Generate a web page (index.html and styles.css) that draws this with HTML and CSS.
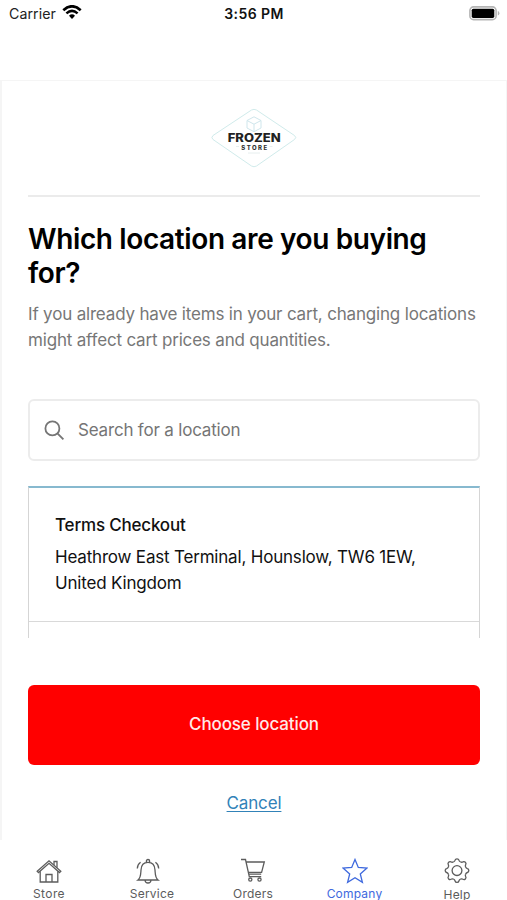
FILE: index.html
```html
<!DOCTYPE html>
<html lang="en">
<head>
<meta charset="utf-8">
<title>Choose location</title>
<link rel="stylesheet" href="styles.css">
</head>
<body>
<div class="screen">
  <header class="status">
    <div class="carrier"><span>Carrier</span>
      <svg width="20" height="15" viewBox="0 0 20 15" fill="none" stroke="#000"><path d="M1.3 5.2Q10-2.6 18.7 5.2" stroke-width="2.7"/><path d="M4.4 8.4Q10 3.4 15.6 8.4" stroke-width="2.5"/><path d="M7 10.7Q10 8 13 10.7L10 14Z" fill="#000" stroke="none"/></svg>
    </div>
    <time>3:56 PM</time>
    <svg class="battery" width="31" height="15" viewBox="0 0 31 15"><rect x=".9" y=".9" width="26.2" height="12.7" rx="3.7" fill="#fff" stroke="#b5b5b5" stroke-width="1.6"/><rect x="2.7" y="2.7" width="22.6" height="9.2" rx="1.6"/><path d="M28.8 5Q30.4 5.5 30.4 7.2T28.8 9.5Z" fill="#b5b5b5"/></svg>
  </header>

  <main class="card">
    <div class="brand">
      <svg width="88" height="60" viewBox="0 0 88 60" fill="none">
        <path d="M41.5 2Q44 .7 46.5 2L84.5 27.5Q87 29.5 84.5 31.5L46.5 58Q44 59.5 41.5 58L3 31.5Q.8 29.5 3 27.5Z" stroke="#d0ebeb"/>
        <path d="M44 8.8L51 12.5V20L44 23.7L37 20V12.5ZM37 12.5L44 16.2L51 12.5M44 16.2V23.7" stroke="#cfe6ec"/>
        <text x="44.2" y="34.4" class="logo-name" textLength="53" lengthAdjust="spacingAndGlyphs">FROZEN</text>
        <text x="44.2" y="41.8" class="logo-sub" textLength="26" lengthAdjust="spacing">STORE</text>
        <path d="M26 38.5H29M59.5 38.5H62.5M38 45H50" stroke="#e6eeee"/>
      </svg>
    </div>
    <h1>Which location are you buying for?</h1>
    <p class="intro">If you already have items in your cart, changing locations might affect cart prices and quantities.</p>
    <div class="search">
      <svg width="21" height="21" viewBox="0 0 21 21" fill="none" stroke="#757575" stroke-width="1.8"><circle cx="8.4" cy="8.4" r="7"/><path d="M13.4 13.4L19.4 19.4"/></svg>
      <span>Search for a location</span>
    </div>
    <div class="locations">
      <div class="location">
        <h2>Terms Checkout</h2>
        <p>Heathrow East Terminal, Hounslow, TW6 1EW, United Kingdom</p>
      </div>
    </div>
    <button class="choose">Choose location</button>
    <a class="cancel" href="#">Cancel</a>
  </main>

  <nav class="tabs">
    <div class="tab store">
      <svg width="26" height="26" viewBox="0 0 26 26"><path d="M1.2 13.2L13 2.8L24.8 13.2L23.5 14.5L13 5.3L2.5 14.5Z"/><path d="M4.2 13.2V24H21.8V13.2M10 24V16.5H16V24M18 7V3.5H21V9.7"/></svg>
      <span>Store</span>
    </div>
    <div class="tab service">
      <svg width="26" height="26" viewBox="0 0 26 26"><path d="M3 22C5.8 20 5.7 17 6 12C6.2 6.8 8.5 4.3 13 4.3S19.8 6.8 20 12C20.3 17 20.2 20 23 22ZM11.4 4.3V3Q11.4 1.5 13 1.5T14.6 3V4.3M10 22.2Q10.3 25 13 25T16 22.2"/><path d="M5.6 4.3Q2.5 6.3 2.3 10.5M20.4 4.3Q23.5 6.3 23.7 10.5"/></svg>
      <span>Service</span>
    </div>
    <div class="tab orders">
      <svg width="26" height="26" viewBox="0 0 26 26"><path d="M1 1.5H5.5L9.3 18.6H21.2M6.1 4H24.3L21.6 14.3H8.4M9 16.2H21.2"/><circle cx="10.3" cy="21.6" r="1.6"/><circle cx="19.5" cy="21.6" r="1.6"/></svg>
      <span>Orders</span>
    </div>
    <div class="tab company">
      <svg width="26" height="26" viewBox="0 0 26 26"><path d="M13 1.5L16.3 9.5L25 10.1L18.3 15.9L20.4 24.3L13 19.7L5.6 24.3L7.7 15.9L1 10.1L9.7 9.5Z"/></svg>
      <span>Company</span>
    </div>
    <div class="tab help">
      <svg width="26" height="26" viewBox="-13 -12.6 26 26"><defs><path id="tooth" d="M-3.56-8.59C-2.46-9.05-2.1-9.6-1.9-10.4Q-1.6-11.8 0-11.8T1.9-10.4C2.1-9.6 2.46-9.05 3.56-8.59"/></defs><use href="#tooth"/><use href="#tooth" transform="rotate(45)"/><use href="#tooth" transform="rotate(90)"/><use href="#tooth" transform="rotate(135)"/><use href="#tooth" transform="rotate(180)"/><use href="#tooth" transform="rotate(225)"/><use href="#tooth" transform="rotate(270)"/><use href="#tooth" transform="rotate(315)"/><circle r="4.9"/></svg>
      <span>Help</span>
    </div>
  </nav>
</div>
</body>
</html>
```
FILE: styles.css
```css
* { box-sizing: border-box; margin: 0; padding: 0; }
body { background: #fff; color: #111; font-family: Inter, "Liberation Sans", sans-serif; }
.screen { width: 507px; height: 900px; overflow: hidden; display: flex; flex-direction: column; }

.status { height: 80px; flex: none; display: grid; grid-template-columns: 1fr auto 1fr; align-items: start; padding: 5px 7px 0 8px; line-height: 18px; }
.carrier { display: flex; gap: 6px; padding-left: 1px; font-size: 14.2px; letter-spacing: .05px; color: #222; }
.status time { font-size: 14px; font-weight: 600; letter-spacing: .4px; }
.battery { justify-self: end; margin-top: 1px; }

.card { height: 760px; flex: none; padding: 0 26px; border: 1px solid #f5f5f5; border-width: 1px 1px 0 2px; }
.brand { height: 116px; padding-top: 27px; border-bottom: 2px solid #ebebeb; display: flex; justify-content: center; }
.logo-name { font: 800 11.5px Inter, sans-serif; fill: #222; text-anchor: middle; }
.logo-sub { font: 800 6px Inter, sans-serif; fill: #333; text-anchor: middle; }
h1 { margin-top: 25px; font-size: 28px; line-height: 34px; font-weight: 600; letter-spacing: -.38px; color: #000; }
.intro { margin: 11px -10px 0 0; font-size: 17px; line-height: 26px; letter-spacing: -.18px; color: #777; }
.search { height: 62px; margin-top: 46px; border: 2px solid #ececec; border-radius: 6px; display: flex; align-items: center; padding-left: 14px; gap: 13px; font-size: 17px; letter-spacing: -.19px; color: #757575; }
.locations { height: 152px; margin-top: 25px; border: 1px solid #d5d5d5; border-top: 2px solid #87b9cf; border-bottom: 0; }
.location { height: 134px; padding: 24px 26px 0; border-bottom: 1px solid #d9d9d9; letter-spacing: -.19px; }
h2 { font-size: 17px; line-height: 26px; font-weight: 500; }
.location p { margin-top: 6px; font-size: 17px; line-height: 26px; }
.choose { display: block; width: 100%; height: 80px; padding-bottom: 2px; margin-top: 47px; border: 0; border-radius: 6px; background: #f00; color: #ffe9e9; font: 500 17px Inter, sans-serif; letter-spacing: -.12px; }
.cancel { display: block; width: max-content; margin: 25px auto 0; font-size: 17px; line-height: 26px; letter-spacing: -.15px; color: #3182b8; text-underline-offset: 2px; }

.tabs { height: 60px; flex: none; display: flex; padding: 18px 0 0; }
.tab { display: flex; flex-direction: column; align-items: center; color: #5c5c5c; font-size: 12px; line-height: 16px; letter-spacing: .2px; flex: none; }
.tab svg { flex: none; fill: none; stroke: currentColor; stroke-width: 1.3; margin-bottom: 2px; }
.tab span { flex: none; }
.store { width: 98px; }
.store span { letter-spacing: .4px; }
.service { width: 108px; }
.service svg { position: relative; left: -4px; }
.orders { width: 94px; }
.company { width: 109px; color: #3e69de; }
.help { width: 96px; }
.help span { margin-top: 1px; }
```
